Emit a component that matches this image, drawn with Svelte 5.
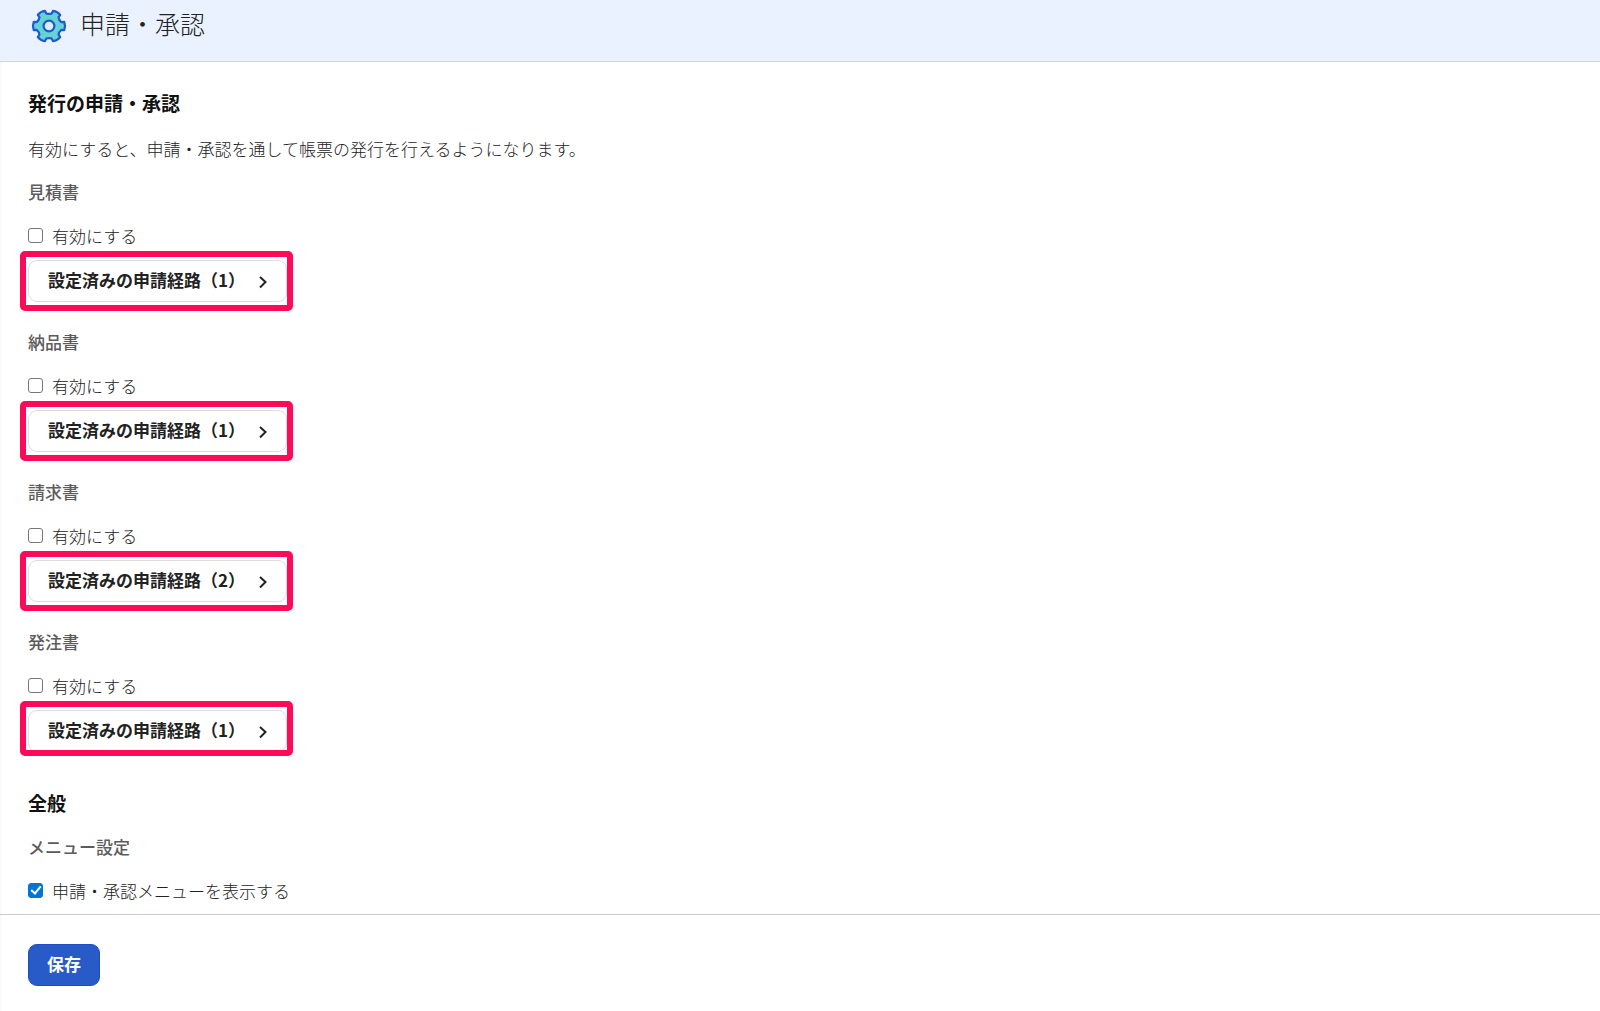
<script>
  let documents = $state([
    { id: 'estimate', name: '見積書', routes: 1, enabled: false },
    { id: 'delivery', name: '納品書', routes: 1, enabled: false },
    { id: 'invoice', name: '請求書', routes: 2, enabled: false },
    { id: 'order', name: '発注書', routes: 1, enabled: false }
  ]);
  let showMenu = $state(true);

  // Six-toothed gear outline around (18, 18)
  const point = (radius, degrees) => {
    const angle = (degrees * Math.PI) / 180;
    return `${(18 + radius * Math.cos(angle)).toFixed(2)} ${(18 + radius * Math.sin(angle)).toFixed(2)}`;
  };
  const gear =
    'M' +
    [0, 60, 120, 180, 240, 300]
      .map((a) => `${point(12.8, a - 18)} L${point(15.8, a - 15)} Q${point(16.8, a)} ${point(15.8, a + 15)} L${point(12.8, a + 18)} Q${point(11.6, a + 30)} ${point(12.8, a + 42)}`)
      .join(' L') +
    ' Z';
</script>

<div class="page">
  <header>
    <svg class="gear" viewBox="0 0 36 36" aria-hidden="true">
      <path d={gear} fill="#63d3d3" stroke="#1f58cf" stroke-width="2.2" stroke-linejoin="round" />
      <circle cx="18" cy="18" r="5.4" fill="#d9eefa" stroke="#1f58cf" stroke-width="2.2" />
    </svg>
    <h1>申請・承認</h1>
  </header>

  <main>
    <h2>発行の申請・承認</h2>
    <p>有効にすると、申請・承認を通して帳票の発行を行えるようになります。</p>

    {#each documents as doc (doc.id)}
      <section>
        <h3>{doc.name}</h3>
        <label>
          <input type="checkbox" bind:checked={doc.enabled} />
          <span>有効にする</span>
        </label>
        <div class="marked">
          <button type="button" class="route">
            <span>設定済みの申請経路（{doc.routes}）</span>
            <svg viewBox="0 0 10 14" aria-hidden="true"><path d="M2 2 L7.5 7 L2 12.5" /></svg>
          </button>
        </div>
      </section>
    {/each}

    <h2 class="general">全般</h2>
    <h3>メニュー設定</h3>
    <label>
      <input type="checkbox" bind:checked={showMenu} />
      <span>申請・承認メニューを表示する</span>
    </label>
  </main>

  <footer>
    <button type="button" class="save">保存</button>
  </footer>
</div>

<style>
  :global(body) {
    margin: 0;
    background: #fff;
  }
  .page {
    min-height: 100vh;
    box-sizing: border-box;
    font-family: "Noto Sans CJK JP", sans-serif;
    font-size: 17px;
    line-height: 24px;
    color: #222;
    box-shadow: inset 2px 0 0 #fafafa;
  }
  h1, h2, h3, p {
    margin: 0;
  }
  header {
    display: flex;
    align-items: flex-start;
    gap: 13px;
    padding: 3px 31px 17px;
    background: #eaf2ff;
    border-bottom: 1px solid #d0d5de;
  }
  .gear {
    width: 36px;
    height: 36px;
    margin-top: 5px;
  }
  h1 {
    font-size: 25px;
    line-height: 40px;
    font-weight: 300;
  }
  main {
    padding: 27px 28px 11px;
  }
  h2 {
    font-size: 19px;
    line-height: 28px;
    font-weight: 700;
    color: #111;
  }
  p {
    margin: 20px 0 19px;
    font-weight: 300;
  }
  h3 {
    margin-bottom: 20px;
    font-size: 17px;
    line-height: 24px;
    font-weight: 500;
    color: #5c5c5c;
  }
  label {
    display: flex;
    align-items: center;
    gap: 9px;
    width: fit-content;
    font-weight: 300;
  }
  input {
    appearance: none;
    box-sizing: border-box;
    width: 15px;
    height: 15px;
    margin: 0 0 2px;
    border: 1px solid #767676;
    border-radius: 3px;
    background: #fff;
    display: grid;
    place-items: center;
  }
  input:checked {
    border-color: #0075d8;
    background: #0075d8;
  }
  input:checked::after {
    content: "";
    box-sizing: border-box;
    width: 6px;
    height: 10px;
    margin-bottom: 2px;
    border: solid #fff;
    border-width: 0 2px 2px 0;
    transform: rotate(40deg);
  }
  section {
    margin-bottom: 28px;
  }
  .marked {
    position: relative;
    width: fit-content;
    margin-top: 12px;
  }
  /* Highlight frame laid over the button */
  .marked::after {
    content: "";
    position: absolute;
    inset: -9px -6px -9px -8px;
    border: 6px solid #ff0a58;
    border-radius: 5px;
    pointer-events: none;
  }
  section:last-of-type .marked::after {
    bottom: -4px;
  }
  button {
    box-sizing: border-box;
    height: 42px;
    font-family: inherit;
    font-size: 17px;
    line-height: 24px;
    font-weight: 700;
    cursor: pointer;
  }
  .route {
    display: flex;
    align-items: center;
    justify-content: space-between;
    width: 259px;
    padding: 0 18px 2px 19px;
    border: 1px solid #dcdcdc;
    border-radius: 9px;
    background: #fff;
    color: #222;
    white-space: nowrap;
  }
  .route svg {
    flex: none;
    width: 10px;
    height: 14px;
    margin-top: 3px;
    fill: none;
    stroke: #222;
    stroke-width: 2;
  }
  .general {
    margin: 37px 0 18px;
  }
  footer {
    padding: 29px 28px 25px;
    border-top: 1px solid #ccc;
  }
  .save {
    display: block;
    padding: 0 18px 2px;
    border: 1px solid #1a4fc4;
    border-radius: 9px;
    background: #285ac8;
    color: #fff;
  }
</style>
